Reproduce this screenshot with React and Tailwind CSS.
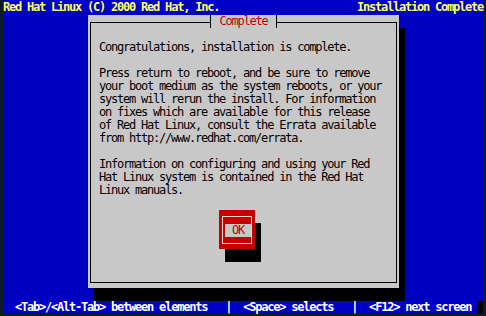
import React from "react";

const mono = "font-['DejaVu_Sans_Mono','Liberation_Mono',monospace] text-[12px] tracking-[-1.22px] whitespace-pre";

const paragraphs = [
	["Congratulations, installation is complete."],
	[
		"Press return to reboot, and be sure to remove",
		"your boot medium as the system reboots, or your",
		"system will rerun the install. For information",
		"on fixes which are available for this release",
		"of Red Hat Linux, consult the Errata available",
		"from http://www.redhat.com/errata.",
	],
	[
		"Information on configuring and using your Red",
		"Hat Linux system is contained in the Red Hat",
		"Linux manuals.",
	],
];

const OkButton = () => {
	return (
		<div className="ml-[120px] mt-[13px] w-[36px] h-[39px] bg-[#c40000] shadow-[6px_13px_0_0_#000] px-[3px] pt-[6px] pb-[5px] flex">
			<div className="flex-1 border border-[#e8d8d8] flex items-center pl-[2px]">
				<div className="w-[26px] h-[13px] bg-[#c8c8c8] text-[#c40000] leading-[13px] text-center">OK</div>
			</div>
		</div>
	);
};

const CompleteDialog = () => {
	return (
		<div className="relative ml-[85px] w-[311px] h-[273px] bg-[#c8c8c8] shadow-[6px_13px_0_0_#000] px-[2px] pt-[7px] pb-[5px] flex">
			{/* title sits on the top border line */}
			<div className="absolute top-0 left-[122px] w-[67px] h-[13px] border-x border-black bg-[#c8c8c8] text-[#c40000] leading-[13px] text-center">
				Complete
			</div>
			<div className="flex-1 border border-black pt-[18px] pl-[8px] text-black">
				<div className="flex flex-col gap-[13px]">
					{paragraphs.map((lines, i) => (
						<div key={i}>
							{lines.map((line) => (
								<div key={line} className="h-[13px] leading-[13px]">{line}</div>
							))}
						</div>
					))}
				</div>
				<OkButton/>
			</div>
		</div>
	);
};

const App = () => {
	return (
		<div className={`w-[486px] h-[316px] bg-[#0d1a28] pl-[3px] pr-[3px] pb-[2px] ${mono}`}>
			<div className="w-[480px] h-[314px] bg-[#0000c0] flex flex-col">
				<div className="h-[15px] bg-[#0000c8] flex justify-between items-start font-bold text-[#ffff5c] leading-[14px]">
					<span>Red Hat Linux (C) 2000 Red Hat, Inc.</span>
					<span>Installation Complete</span>
				</div>
				<div className="h-[286px]">
					<CompleteDialog/>
				</div>
				<div className="h-[13px] bg-[#0000c8] flex font-bold text-white leading-[13px]">
					<span>{"  <Tab>/<Alt-Tab> between elements   |  <Space> selects   |  <F12> next screen"}</span>
					<span className="ml-auto w-[6px] h-full bg-black"></span>
				</div>
			</div>
		</div>
	);
};

export default App;
